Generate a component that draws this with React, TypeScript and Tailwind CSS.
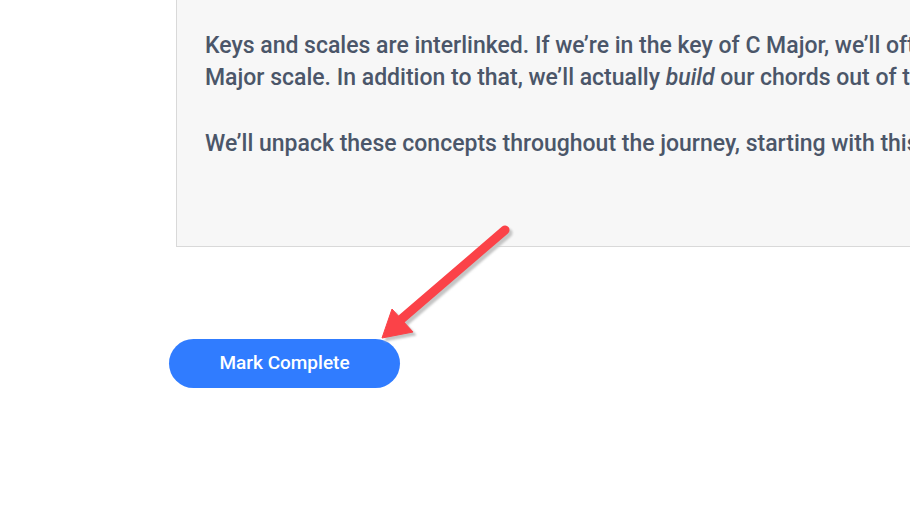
import React from 'react';

function Arrow() {
  return (
    <svg className="pointer-events-none absolute left-0 top-0" width="910" height="511" viewBox="0 0 910 511">
      <defs>
        <filter id="soft" x="-20%" y="-20%" width="140%" height="140%">
          <feGaussianBlur stdDeviation="1" />
        </filter>
      </defs>
      {/* shadow */}
      <g transform="translate(3 3)" fill="#c4c4c4" stroke="#c4c4c4" filter="url(#soft)">
        <line x1="505" y1="230" x2="398" y2="322" strokeWidth="9" strokeLinecap="round" />
        <polygon points="382,338 392,309 413,332" strokeWidth="1" />
      </g>
      <g fill="#fb4248" stroke="#fb4248">
        <line x1="505" y1="230" x2="398" y2="322" strokeWidth="9" strokeLinecap="round" />
        <polygon points="382,338 392,309 413,332" strokeWidth="1" strokeLinejoin="round" />
      </g>
    </svg>
  );
}

export default function App() {
  return (
    <div className="relative h-[511px] w-[910px] overflow-hidden bg-white font-['Roboto',sans-serif]">
      <div className="pl-[176px]">
        <div className="w-[900px] border-b border-l border-[#d9d9d9] bg-[#f7f7f7] pb-[86px] pl-[28px] pt-[30px] text-[23px] font-medium leading-[32px] text-[#4b5669]">
          <p className="whitespace-nowrap">
            Keys and scales are interlinked. If we’re in the key of C Major, we’ll often use the notes of the C
            <br />
            Major scale. In addition to that, we’ll actually <em>build</em> our chords out of the notes in the scale.
          </p>
          <p className="mt-[34px] whitespace-nowrap">
            We’ll unpack these concepts throughout the journey, starting with this lesson.
          </p>
        </div>
      </div>
      <div className="pl-[169px] pt-[92px]">
        <button
          type="button"
          className="flex h-[49px] w-[231px] items-center justify-center rounded-full bg-[#307cff] text-[19px] font-medium text-white"
        >
          Mark Complete
        </button>
      </div>
      <Arrow />
    </div>
  );
}
